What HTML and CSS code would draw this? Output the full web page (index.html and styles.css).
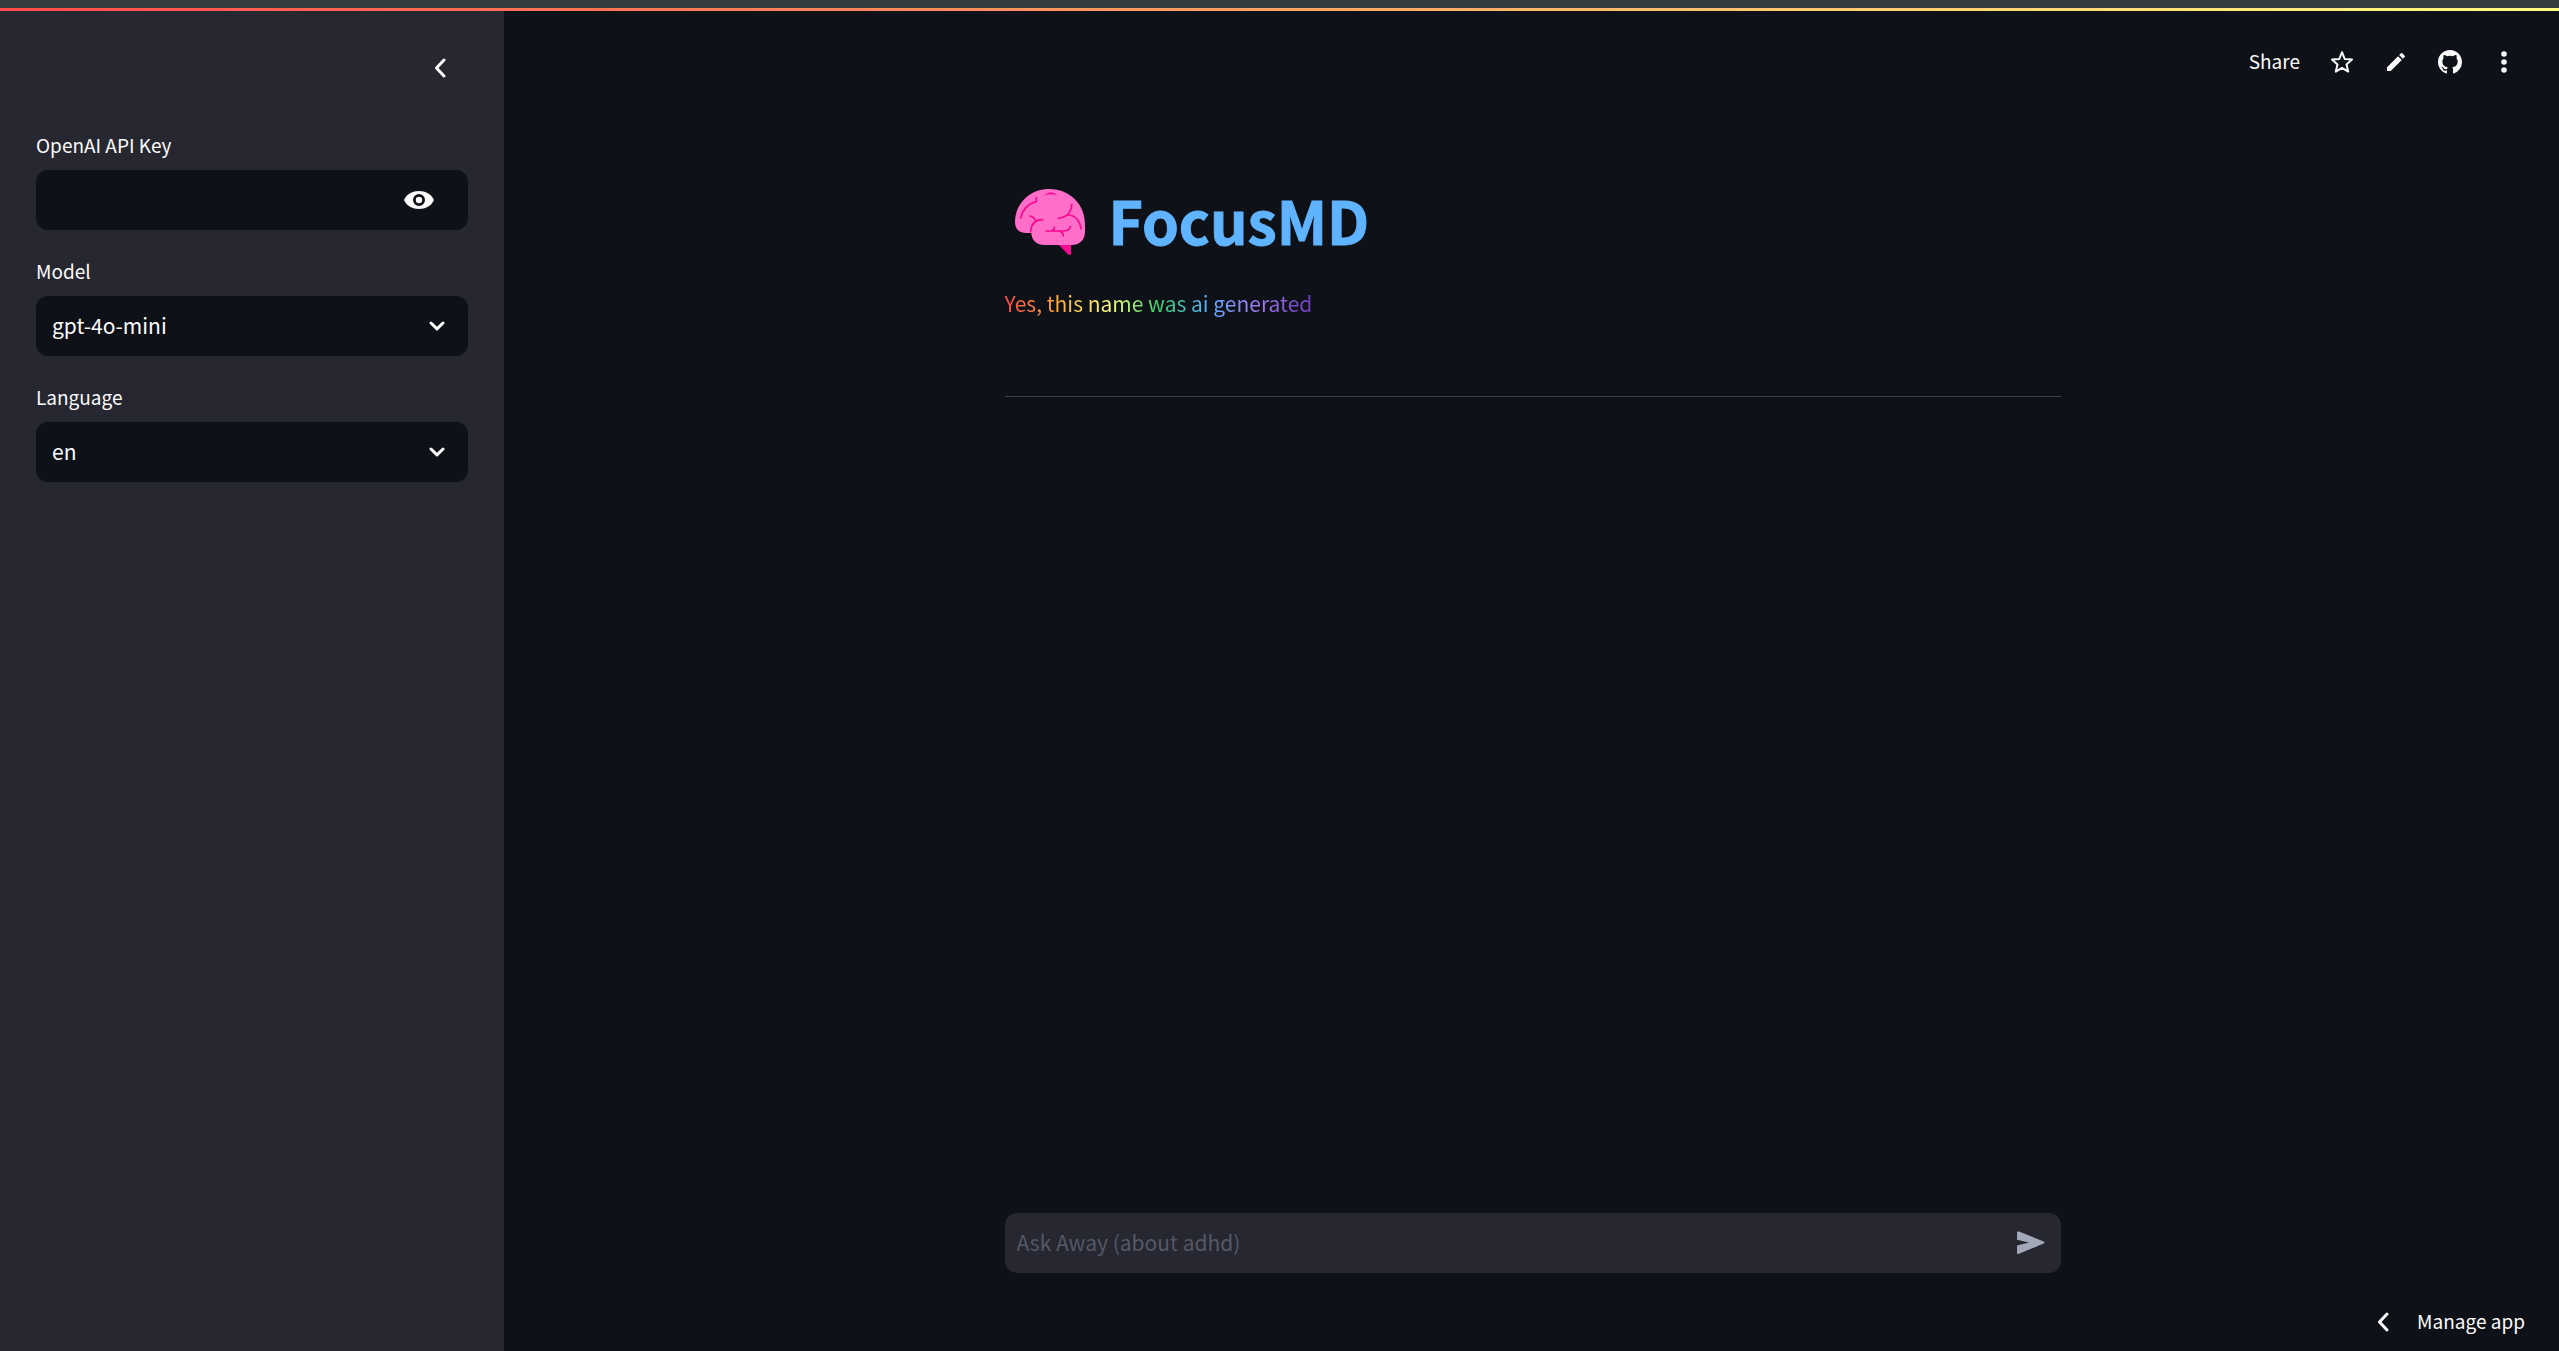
FILE: index.html
```html
<!DOCTYPE html>
<html lang="en">
<head>
<meta charset="utf-8">
<meta name="viewport" content="width=device-width, initial-scale=1">
<title>FocusMD</title>
<link rel="stylesheet" href="styles.css">
</head>
<body>
<div class="topstrip"></div>
<div class="app">
  <aside class="sidebar">
    <div class="sidebar-head">
      <button class="icon-btn" type="button" aria-label="Collapse sidebar">
        <svg width="12" height="20" viewBox="0 0 12 20"><path class="line" d="M10 2 2.500 10 10 18"/></svg>
      </button>
    </div>
    <form class="settings">
      <div class="field">
        <label for="key">OpenAI API Key</label>
        <div class="control">
          <input id="key" type="password">
          <button class="icon-btn eye" type="button" aria-label="Show password">
            <svg width="30" height="18" viewBox="0 0 30 18"><path fill-rule="evenodd" d="M0 9C5-3 25-3 30 9 25 21 5 21 0 9ZM15 3a6 6 0 1 0 0 12 6 6 0 0 0 0-12Z"/><circle cx="15" cy="9" r="3.200"/></svg>
          </button>
        </div>
      </div>
      <div class="field">
        <label for="model">Model</label>
        <div class="control">
          <select id="model"><option>gpt-4o-mini</option></select>
          <svg class="caret" width="16" height="10" viewBox="0 0 16 10"><path class="line" d="M2 2 8 7.800 14 2"/></svg>
        </div>
      </div>
      <div class="field">
        <label for="language">Language</label>
        <div class="control">
          <select id="language"><option>en</option></select>
          <svg class="caret" width="16" height="10" viewBox="0 0 16 10"><path class="line" d="M2 2 8 7.800 14 2"/></svg>
        </div>
      </div>
    </form>
  </aside>
  <div class="page">
    <header class="toolbar">
      <button class="text-btn" type="button"><span>Share</span></button>
      <button class="icon-btn" type="button" aria-label="Star">
        <svg width="24" height="24" viewBox="0 0 24 24"><path class="thin" d="M12 2.200 14.700 9 22 9.600 16.500 14.400 18.200 21.600 12 17.800 5.800 21.600 7.500 14.400 2 9.600 9.300 9Z"/></svg>
      </button>
      <button class="icon-btn" type="button" aria-label="Edit">
        <svg width="24" height="24" viewBox="0 0 24 24"><path d="M3 17.250V21h3.750L17.810 9.940l-3.750-3.750ZM20.710 7.040a1 1 0 0 0 0-1.410l-2.340-2.340a1 1 0 0 0-1.410 0l-1.830 1.830 3.750 3.750Z"/></svg>
      </button>
      <button class="icon-btn" type="button" aria-label="View source on GitHub">
        <svg width="24" height="24" viewBox="0 0 16 16"><path d="M8 0C3.580 0 0 3.580 0 8c0 3.540 2.290 6.530 5.470 7.590.4.070.55-.17.55-.38 0-.19-.01-.82-.01-1.490-2.010.37-2.530-.49-2.690-.94-.09-.23-.48-.94-.82-1.130-.28-.15-.68-.52-.01-.53.63-.01 1.080.58 1.230.82.72 1.210 1.870.87 2.330.66.07-.52.28-.87.51-1.070-1.780-.2-3.640-.89-3.640-3.950 0-.87.31-1.590.82-2.150-.08-.2-.36-1.020.08-2.120 0 0 .67-.21 2.200.82a7.600 7.600 0 0 1 4 0c1.530-1.040 2.200-.82 2.200-.82.44 1.100.16 1.920.08 2.120.51.56.82 1.270.82 2.150 0 3.070-1.870 3.750-3.650 3.950.29.25.54.73.54 1.480 0 1.070-.01 1.930-.01 2.200 0 .21.15.46.55.38A8 8 0 0 0 16 8c0-4.420-3.580-8-8-8Z"/></svg>
      </button>
      <button class="icon-btn" type="button" aria-label="Menu">
        <svg width="24" height="24" viewBox="0 0 24 24"><circle cx="12" cy="4" r="2.800"/><circle cx="12" cy="12" r="2.800"/><circle cx="12" cy="20" r="2.800"/></svg>
      </button>
    </header>
    <main class="content">
      <h1>
        <svg class="brain" width="70" height="66" viewBox="105 57 210 198" aria-hidden="true">
          <path fill="#f90a92" d="M233 221H273V251Q270 258 264 253Z"/>
          <path fill="#ff6ec8" d="M105 157C105 100 150 57 208 57 270 57 315 103 315 163V185C315 210 298 225 275 225H192C168 225 154 208 154 189H137C117 189 105 176 105 157Z"/>
          <g fill="none" stroke="#f90a92" stroke-width="5" stroke-linecap="round" stroke-linejoin="round">
            <path d="M122 144C128 116 146 101 169 94V83"/>
            <path d="M150 138Q163 141 168 154M152 184C154 161 167 149 188 149"/>
            <path d="M275 104C274 126 260 141 235 145M264 135C286 135 300 153 303 176"/>
            <path d="M198 183H250Q268 183 271 170M223 171Q224 180 216 182M240 184Q250 188 250 197"/>
          </g>
          <path fill="#f90a92" d="M192 77Q212 56 234 77 212 69 192 77Z"/>
        </svg>
        <span>FocusMD</span>
      </h1>
      <p class="tagline"><span>Yes, this name was ai generated</span></p>
      <hr>
    </main>
    <form class="chat">
      <input type="text" placeholder="Ask Away (about adhd)" aria-label="Message">
      <button class="icon-btn send" type="button" aria-label="Send">
        <svg width="28" height="24" viewBox="0 0 28 24"><path d="M0 1.500Q0 0 2 .6L26 10.200Q29 11.500 26 12.800L2 22.800Q0 23.400 0 22V14.500L12 11.600 0 8.700Z"/></svg>
      </button>
    </form>
    <footer class="manage">
      <button class="text-btn" type="button">
        <svg width="12" height="20" viewBox="0 0 12 20"><path class="line" d="M10 2 2.500 10 10 18"/></svg>
        <span>Manage app</span>
      </button>
    </footer>
  </div>
</div>
</body>
</html>
```

FILE: styles.css
```css
* {
  box-sizing: border-box;
}

body {
  margin: 0;
  min-height: 100vh;
  display: flex;
  flex-direction: column;
  background: #0e1117;
  color: #fafafa;
  font-family: "Noto Sans CJK JP", "Noto Sans", sans-serif;
  font-size: 21px;
}

button,
input,
select {
  margin: 0;
  padding: 0;
  border: 0;
  background: none;
  color: inherit;
  font: inherit;
}

svg {
  display: block;
  fill: currentColor;
}

.line,
.thin {
  fill: none;
  stroke: currentColor;
  stroke-width: 3;
  stroke-linecap: round;
  stroke-linejoin: round;
}

.thin {
  stroke-width: 2;
}

.topstrip {
  height: 11px;
  border-top: 8px solid #363d3f;
  background: linear-gradient(to right, #ff4b4b, #fffd80);
}

.app {
  flex: 1;
  display: flex;
}

.sidebar {
  width: 504px;
  flex: none;
  padding: 0 36px;
  background: #262730;
}

.sidebar-head {
  height: 117px;
  padding: 47px 22px 0 0;
  display: flex;
  justify-content: flex-end;
  align-items: flex-start;
}

.settings {
  display: flex;
  flex-direction: column;
  gap: 24px;
}

.field {
  display: flex;
  flex-direction: column;
  gap: 8px;
}

.field label {
  font-size: 19px;
  line-height: 34px;
}

.control {
  display: grid;
  align-items: center;
  height: 60px;
  border-radius: 12px;
  background: #0e1117;
}

.control > * {
  grid-area: 1 / 1;
}

.control input,
.control select {
  width: 100%;
  height: 60px;
  padding: 0 16px 2px;
  border-radius: 12px;
  appearance: none;
}

.control option {
  background: #0e1117;
}

.eye {
  justify-self: end;
  margin-right: 34px;
}

.caret {
  justify-self: end;
  margin-right: 23px;
  pointer-events: none;
}

.page {
  flex: 1;
  padding-left: 2px;
  display: flex;
  flex-direction: column;
  align-items: center;
}

.toolbar {
  align-self: stretch;
  height: 102px;
  padding-right: 43px;
  display: flex;
  justify-content: flex-end;
  align-items: center;
  gap: 30px;
}

.text-btn {
  display: flex;
  align-items: center;
  gap: 28px;
  font-size: 19px;
  line-height: 36px;
}

.text-btn span {
  padding-bottom: 2px;
}

.content {
  flex: 1;
  width: 100%;
  max-width: 1056px;
  padding-top: 64px;
}

h1 {
  display: flex;
  align-items: center;
  gap: 24px;
  height: 90px;
  margin: 0;
  padding-left: 10px;
  color: #60b4ff;
  font-size: 59px;
  line-height: 86px;
}

h1 span {
  padding-bottom: 4px;
  -webkit-text-stroke: 1px currentColor;
}

.tagline {
  margin: 17px 0 0;
  line-height: 38px;
}

.tagline span {
  background: linear-gradient(to right, #ff4b4b, #ffa73d, #fffd80, #3dd56d, #60a8ff, #a374f0, #6b3cbb);
  background-clip: text;
  color: transparent;
}

hr {
  height: 1px;
  margin: 74px 0 0;
  border: 0;
  background: #3d4045;
}

.chat {
  display: flex;
  align-items: center;
  width: 100%;
  max-width: 1056px;
  height: 60px;
  padding: 0 16px 0 12px;
  border-radius: 12px;
  background: #262730;
}

.chat input {
  flex: 1;
  height: 60px;
  padding-bottom: 2px;
}

.chat input::placeholder {
  color: #555867;
  opacity: 1;
}

.send {
  color: #a3a8b8;
}

.manage {
  align-self: stretch;
  height: 78px;
  padding: 20px 34px 0 0;
  display: flex;
  justify-content: flex-end;
  align-items: center;
}
```
